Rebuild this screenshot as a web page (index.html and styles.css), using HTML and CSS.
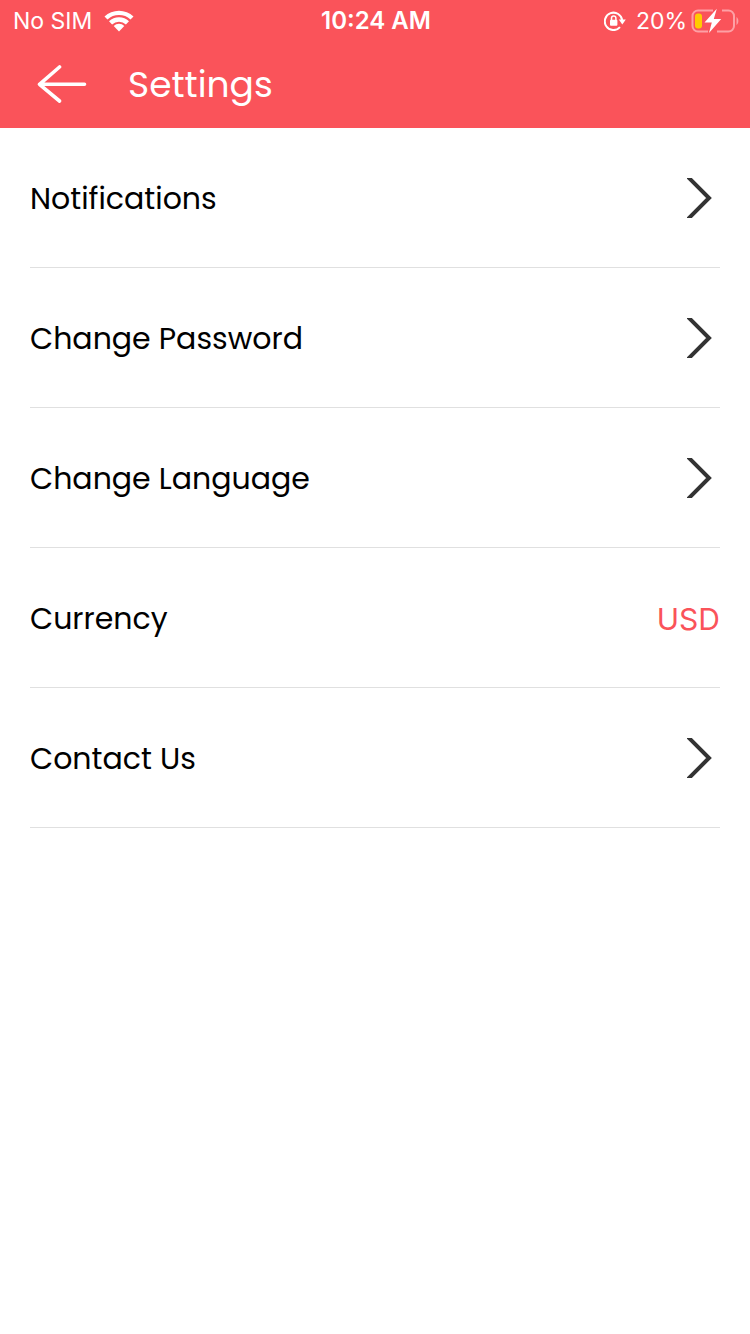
FILE: index.html
```html
<!DOCTYPE html>
<html lang="en">
<head>
<meta charset="utf-8">
<meta name="viewport" content="width=device-width, initial-scale=1">
<title>Settings</title>
<link rel="stylesheet" href="styles.css">
</head>
<body>
<header class="header">
  <div class="status">
    <div class="status-left">
      <span>No SIM</span>
      <svg class="wifi" width="30" height="22" viewBox="0 0 30 22" aria-hidden="true">
        <path d="M0.5 6.5A21 21 0 0 1 29.5 6.5L26.500 9.600A17 17 0 0 0 3.500 9.600Z"/>
        <path d="M5 11.300A14.200 14.200 0 0 1 25 11.300L21.900 14.500A10.200 10.200 0 0 0 8.100 14.500Z"/>
        <path d="M9.700 16A7.400 7.400 0 0 1 20.300 16L15 21.500Z"/>
      </svg>
    </div>
    <time class="clock">10:24 AM</time>
    <div class="status-right">
      <svg class="lock" width="22" height="20" viewBox="0 0 22 20" fill="none" stroke="#fff" aria-hidden="true">
        <path d="M16 16.200A8.700 8.700 0 1 1 18.200 9.500" stroke-width="2"/>
        <path d="M14.800 8.600H21.800L18.300 13.400Z" fill="#fff" stroke="none"/>
        <rect x="6" y="8.800" width="7.400" height="6" rx="1" fill="#fff" stroke="none"/>
        <path d="M7.500 9.500V7.300A2.200 2.200 0 0 1 11.900 7.300V9.500" stroke-width="1.500"/>
      </svg>
      <span>20%</span>
      <svg class="battery" width="48" height="26" viewBox="0 0 48 26" aria-hidden="true">
        <path d="M22 2.500H7A5.500 5.500 0 0 0 1.500 8V18A5.500 5.500 0 0 0 7 23.500H17M31 2.500H37.500A5.500 5.500 0 0 1 43 8V18A5.500 5.500 0 0 1 37.500 23.500H26" fill="none" stroke="#fda0a5" stroke-width="2"/>
        <path d="M45.500 9C48 10.500 48 15.500 45.500 17Z" fill="#fda0a5"/>
        <rect x="4" y="5.500" width="7" height="15" rx="3" fill="#ffcc00"/>
        <path d="M25.800 0.800L13.500 14.600H20.800L18 25L30.200 11H22.800Z" fill="#fff"/>
      </svg>
    </div>
  </div>
  <div class="bar">
    <button class="back" type="button" aria-label="Back">
      <svg width="50" height="38" viewBox="0 0 50 38" fill="none" stroke="#fff" stroke-width="3.600" stroke-linecap="round" stroke-linejoin="round" aria-hidden="true">
        <path d="M22.500 2L2.500 19.300L22.500 36M2.500 19.300H47.500"/>
      </svg>
    </button>
    <h1 class="title">Settings</h1>
  </div>
</header>
<main class="list">
  <button class="row" type="button"><span>Notifications</span><svg class="chevron" viewBox="0 0 26 40" aria-hidden="true"><path d="M1 -1L22 20L1 41"/></svg></button>
  <button class="row" type="button"><span>Change Password</span><svg class="chevron" viewBox="0 0 26 40" aria-hidden="true"><path d="M1 -1L22 20L1 41"/></svg></button>
  <button class="row" type="button"><span>Change Language</span><svg class="chevron" viewBox="0 0 26 40" aria-hidden="true"><path d="M1 -1L22 20L1 41"/></svg></button>
  <button class="row" type="button"><span>Currency</span><span class="value">USD</span></button>
  <button class="row" type="button"><span>Contact Us</span><svg class="chevron" viewBox="0 0 26 40" aria-hidden="true"><path d="M1 -1L22 20L1 41"/></svg></button>
</main>
</body>
</html>
```
FILE: styles.css
```css
* {
  box-sizing: border-box;
}

body {
  margin: 0;
  background: #fff;
  color: #000;
  font-family: Poppins, Inter, sans-serif;
}

button {
  border: 0;
  background: none;
  color: inherit;
  font: inherit;
  cursor: pointer;
}

.header {
  background: #fa535a;
  color: #fff;
}

.status {
  display: grid;
  grid-template-columns: 1fr auto 1fr;
  align-items: center;
  height: 40px;
  padding: 0 11px 0 13px;
  font-family: Inter, sans-serif;
  font-size: 24px;
  line-height: 40px;
}

.status span,
.status time {
  padding-top: 1px;
}

.status-left,
.status-right {
  display: flex;
  align-items: center;
}

.status-left {
  gap: 8px;
}

.status-right {
  justify-content: flex-end;
  gap: 10px;
}

.battery {
  margin-left: -6px;
}

.status-right span,
.status-left span {
  font-size: 23px;
}

.status-left {
  gap: 12px;
}

.wifi {
  fill: #fff;
}

.clock {
  font-weight: 600;
}

.bar {
  display: flex;
  align-items: center;
  gap: 41px;
  height: 88px;
  padding: 0 37px;
}

.back {
  display: flex;
  padding: 0;
}

.title {
  margin: 0;
  padding-top: 2px;
  font-size: 36px;
  font-weight: 400;
  line-height: 56px;
}

.list {
  display: flex;
  flex-direction: column;
  padding: 0 30px;
}

.row {
  display: flex;
  align-items: center;
  justify-content: space-between;
  height: 140px;
  padding: 2px 0 0;
  border-bottom: 1px solid #e0e0e0;
  font-size: 30px;
  line-height: 44px;
  text-align: left;
}

.value {
  color: #fa535a;
  font-family: Inter, sans-serif;
  font-size: 30px;
}

.chevron {
  width: 26px;
  height: 40px;
  margin: 0 7px 2px 0;
  overflow: hidden;
  fill: none;
  stroke: #333;
  stroke-width: 4;
}
```
